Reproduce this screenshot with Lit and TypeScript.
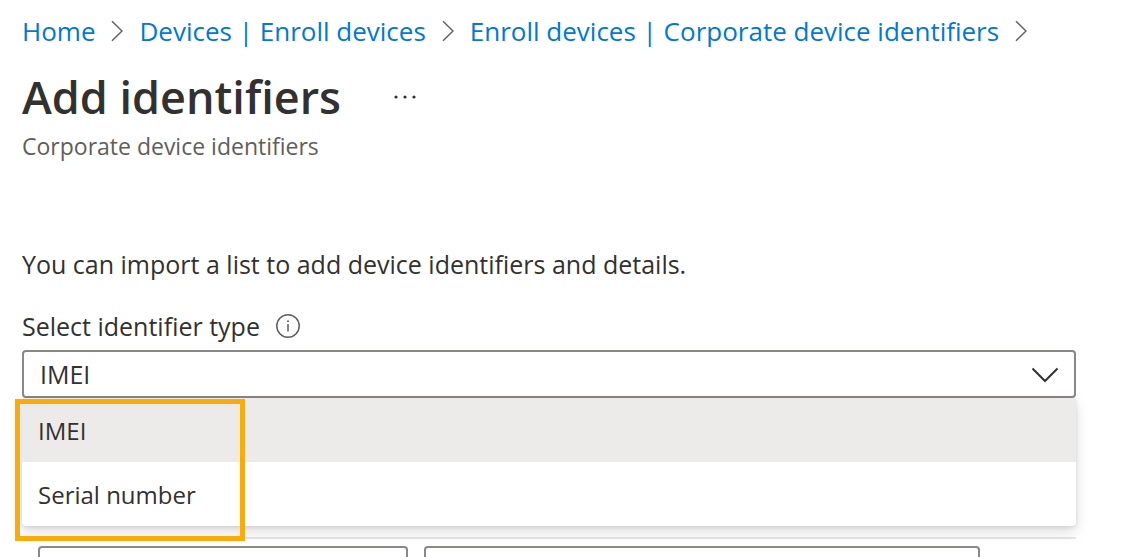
import { LitElement, html, css } from "lit";
import { customElement, state } from "lit/decorators.js";

const TYPES = ["IMEI", "Serial number"];
const TRAIL = ["Home", "Devices | Enroll devices", "Enroll devices | Corporate device identifiers"];

@customElement("app-root")
export class AppRoot extends LitElement {
  static styles = css`
    :host {
      display: block;
      height: 100vh;
      overflow: hidden;
      background: #fff;
      color: #323130;
      font-family: "Open Sans", "Noto Sans", sans-serif;
      font-size: 25px;
      line-height: 32px;
    }
    * { box-sizing: border-box; }
    .page { padding: 15px 49px 0 22px; }
    .trail {
      display: flex;
      align-items: center;
      margin: 0;
      padding: 0;
      list-style: none;
      font-size: 26px;
      white-space: nowrap;
    }
    .crumb { display: flex; align-items: center; }
    .link { color: #0078d4; text-decoration: none; }
    .sep { display: block; width: 12px; height: 22px; margin: 0 16px; }
    .heading { display: flex; align-items: center; gap: 48px; margin-top: 20px; }
    .title { margin: 0; font-size: 45px; line-height: 60px; font-weight: 600; }
    .more { padding: 0 4px; border: 0; background: none; display: flex; }
    .subtitle { margin: 4px 0 0; font-size: 23px; line-height: 30px; color: #605e5c; }
    .intro { margin: 87px 0 0; }
    .labelrow { display: flex; align-items: center; gap: 16px; margin-top: 30px; }
    .info { padding: 0; border: 0; background: none; display: flex; }
    .field { position: relative; margin-top: 8px; }
    .select {
      display: block;
      width: 100%;
      height: 48px;
      padding: 0 16px;
      border: 2px solid #8a8886;
      border-radius: 4px;
      background: #fff;
      color: inherit;
      font: inherit;
      appearance: none;
    }
    .chevron { position: absolute; right: 17px; top: 17px; pointer-events: none; }
    .menu {
      position: absolute;
      z-index: 1;
      top: 100%;
      left: 0;
      right: 0;
      background: #fff;
      border-radius: 0 0 4px 4px;
      box-shadow: 0 6px 14px rgba(0, 0, 0, 0.13), 0 1px 4px rgba(0, 0, 0, 0.11);
    }
    .option {
      display: block;
      width: 100%;
      height: 64px;
      padding: 2px 16px 0;
      border: 0;
      border-radius: 0 0 4px 4px;
      background: none;
      color: inherit;
      font: inherit;
      font-size: 24px;
      text-align: left;
    }
    .option.current { background: #edebe9; border-radius: 0; }
    .callout {
      position: absolute;
      top: 1px;
      left: -7px;
      width: 230px;
      height: 142px;
      border: 5px solid #faab0c;
      pointer-events: none;
    }
    .rows { margin-top: 139px; border-top: 2px solid #e5e5e5; }
    .row {
      display: grid;
      grid-template-columns: 2fr 3fr 80px;
      gap: 16px;
      padding: 7px 0 8px 16px;
    }
    .input {
      width: 100%;
      height: 48px;
      padding: 0 16px;
      border: 2px solid #8a8886;
      border-radius: 4px;
      font: inherit;
    }
  `;

  @state() private type = TYPES[0];

  render() {
    return html`
      <main class="page">
        <nav aria-label="Breadcrumb">
          <ol class="trail">
            ${TRAIL.map(
              (name) => html`<li class="crumb">
                <a class="link" href="#">${name}</a>
                <svg class="sep" viewBox="0 0 12 22" fill="none" stroke="#605e5c" stroke-width="1.4" aria-hidden="true">
                  <path d="M1 1.2 11 11 1 20.8" />
                </svg>
              </li>`
            )}
          </ol>
        </nav>
        <header class="heading">
          <h1 class="title">Add identifiers</h1>
          <button class="more" aria-label="More actions">
            <svg width="24" height="4" viewBox="0 0 24 4" fill="#323130">
              <circle cx="3" cy="2" r="1.6" /><circle cx="12" cy="2" r="1.6" /><circle cx="21" cy="2" r="1.6" />
            </svg>
          </button>
        </header>
        <p class="subtitle">Corporate device identifiers</p>

        <p class="intro">You can import a list to add device identifiers and details.</p>
        <div class="labelrow">
          <label for="type">Select identifier type</label>
          <button class="info" aria-label="About identifier types">
            <svg width="24" height="24" viewBox="0 0 24 24" fill="none" stroke="#605e5c" stroke-width="1.5">
              <circle cx="12" cy="12" r="11.2" />
              <path d="M12 10v7.5" />
              <circle cx="12" cy="7.2" r="1" fill="#605e5c" stroke="none" />
            </svg>
          </button>
        </div>
        <div class="field">
          <select
            class="select"
            id="type"
            .value=${this.type}
            @change=${(e: Event) => (this.type = (e.target as HTMLSelectElement).value)}
          >
            ${TYPES.map((t) => html`<option value=${t}>${t}</option>`)}
          </select>
          <svg class="chevron" width="28" height="16" viewBox="0 0 28 16" fill="none" stroke="#323130" stroke-width="2" aria-hidden="true">
            <path d="M1.5 1.5 14 14 26.5 1.5" />
          </svg>
          <div class="menu" role="listbox" aria-label="Identifier type">
            ${TYPES.map(
              (t) => html`<button
                class="option ${t === this.type ? "current" : ""}"
                role="option"
                aria-selected=${t === this.type ? "true" : "false"}
                @click=${() => (this.type = t)}
              >${t}</button>`
            )}
            <div class="callout"></div>
          </div>
        </div>
        <section class="rows">
          <div class="row">
            <input class="input" type="text" aria-label="Identifier" />
            <input class="input" type="text" aria-label="Details" />
          </div>
        </section>
      </main>
    `;
  }
}
